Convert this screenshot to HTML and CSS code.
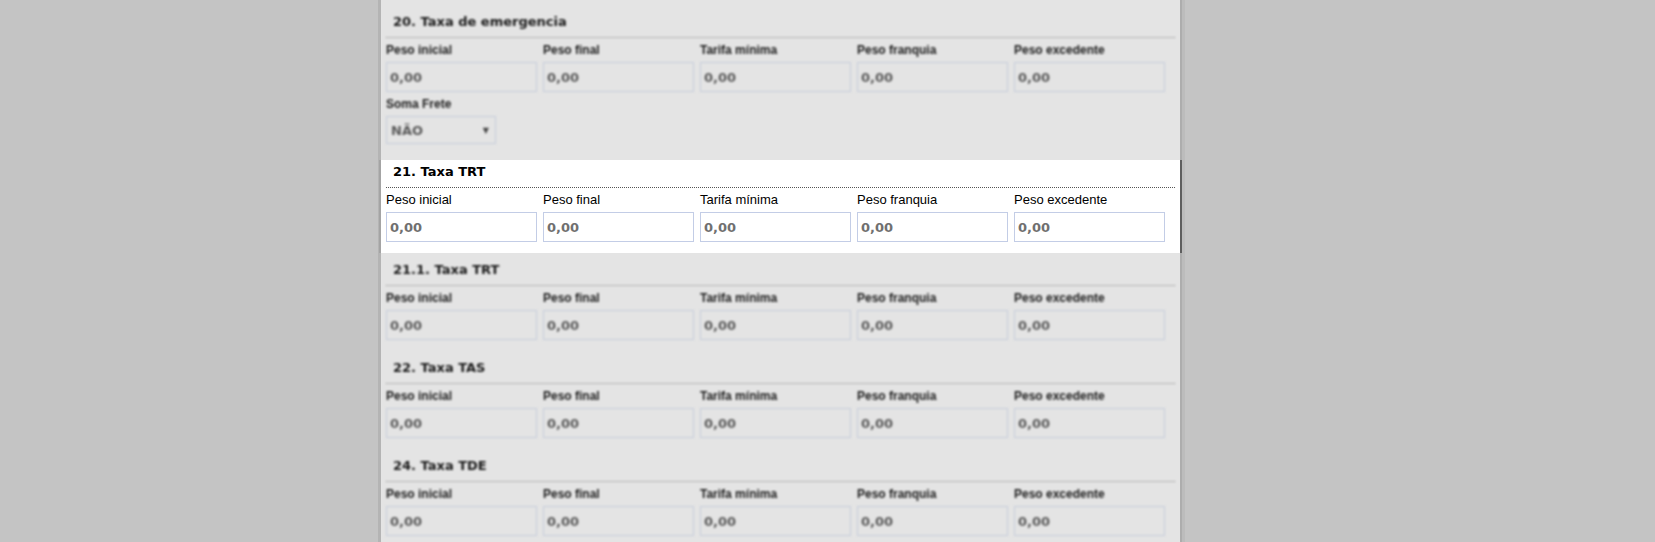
FILE: index.html
```html
<!DOCTYPE html>
<html lang="pt-BR">
<head>
  <meta charset="UTF-8" />
  <title>Taxas</title>
  <link rel="stylesheet" href="styles.css">
</head>
<body>
  <div id="panel">

    <div class="section dim">
      <h3>20. Taxa de emergencia</h3>
      <div class="row">
        <div class="field"><label>Peso inicial</label><input type="text" value="0,00"></div>
        <div class="field"><label>Peso final</label><input type="text" value="0,00"></div>
        <div class="field"><label>Tarifa mínima</label><input type="text" value="0,00"></div>
        <div class="field"><label>Peso franquia</label><input type="text" value="0,00"></div>
        <div class="field"><label>Peso excedente</label><input type="text" value="0,00"></div>
      </div>
      <div class="row">
        <div class="field">
          <label>Soma Frete</label>
          <div class="select"><span>NÃO</span><span class="arrow">▼</span></div>
        </div>
      </div>
    </div>

    <div class="section focus">
      <h3>21. Taxa TRT</h3>
      <div class="row">
        <div class="field"><label>Peso inicial</label><input type="text" value="0,00"></div>
        <div class="field"><label>Peso final</label><input type="text" value="0,00"></div>
        <div class="field"><label>Tarifa mínima</label><input type="text" value="0,00"></div>
        <div class="field"><label>Peso franquia</label><input type="text" value="0,00"></div>
        <div class="field"><label>Peso excedente</label><input type="text" value="0,00"></div>
      </div>
    </div>

    <div class="section dim">
      <h3>21.1. Taxa TRT</h3>
      <div class="row">
        <div class="field"><label>Peso inicial</label><input type="text" value="0,00"></div>
        <div class="field"><label>Peso final</label><input type="text" value="0,00"></div>
        <div class="field"><label>Tarifa mínima</label><input type="text" value="0,00"></div>
        <div class="field"><label>Peso franquia</label><input type="text" value="0,00"></div>
        <div class="field"><label>Peso excedente</label><input type="text" value="0,00"></div>
      </div>
    </div>

    <div class="section dim">
      <h3>22. Taxa TAS</h3>
      <div class="row">
        <div class="field"><label>Peso inicial</label><input type="text" value="0,00"></div>
        <div class="field"><label>Peso final</label><input type="text" value="0,00"></div>
        <div class="field"><label>Tarifa mínima</label><input type="text" value="0,00"></div>
        <div class="field"><label>Peso franquia</label><input type="text" value="0,00"></div>
        <div class="field"><label>Peso excedente</label><input type="text" value="0,00"></div>
      </div>
    </div>

    <div class="section dim">
      <h3>24. Taxa TDE</h3>
      <div class="row">
        <div class="field"><label>Peso inicial</label><input type="text" value="0,00"></div>
        <div class="field"><label>Peso final</label><input type="text" value="0,00"></div>
        <div class="field"><label>Tarifa mínima</label><input type="text" value="0,00"></div>
        <div class="field"><label>Peso franquia</label><input type="text" value="0,00"></div>
        <div class="field"><label>Peso excedente</label><input type="text" value="0,00"></div>
      </div>
    </div>

  </div>
</body>
</html>
```

FILE: styles.css
```css
html, body {
  margin: 0;
  padding: 0;
  background: #c4c4c4;
  overflow: hidden;
}
#panel {
  width: 799px;
  margin-left: 378px;
  padding-top: 10px;
  min-height: 600px;
  background: #e4e4e4;
  border-left: 3px solid #b4b4b4;
  border-right: 2px solid #adadad;
  box-shadow: 3px 0 0 #bcbcbc;
}
.section {
  padding: 4px 5px 11px;
  margin-bottom: 5px;
}
.section h3 {
  margin: 0;
  padding: 0 0 7px 7px;
  font-family: "DejaVu Sans", Verdana, sans-serif;
  font-size: 13px;
  font-weight: bold;
  line-height: 16px;
  color: #000;
  border-bottom: 1px dotted #555;
}
.row {
  display: flex;
  gap: 6px;
  margin-top: 4px;
}
.field {
  display: flex;
  flex-direction: column;
  gap: 4px;
  width: 151px;
}
.field label {
  font-family: "Liberation Sans", Arial, sans-serif;
  font-size: 13px;
  line-height: 16px;
  color: #000;
}
.field input {
  box-sizing: border-box;
  width: 151px;
  height: 30px;
  margin: 0;
  padding: 0 3px;
  border: 1px solid #c3cde6;
  background: #fff;
  font-family: "DejaVu Sans", Verdana, sans-serif;
  font-size: 13px;
  font-weight: bold;
  color: #707070;
  outline: none;
}
.select {
  box-sizing: border-box;
  width: 110px;
  height: 28px;
  padding: 0 6px 0 4px;
  display: flex;
  align-items: center;
  justify-content: space-between;
  border: 1px solid #c3cde6;
  background: #fff;
  font-family: "DejaVu Sans", Verdana, sans-serif;
  font-size: 13px;
  font-weight: bold;
  color: #555;
}
.select .arrow {
  font-size: 8px;
  color: #444;
}

/* everything but the highlighted block sits under a grey, blurred veil */
.dim {
  filter: blur(1px);
}
.dim h3 {
  color: #1a1a1a;
  border-bottom-color: #888;
}
.dim .field label {
  color: #1c1c1c;
  font-weight: bold;
  font-size: 12px;
}
.dim .field input,
.dim .select {
  background: #e4e4e4;
  border-color: #c6ccda;
  color: #5a5a5a;
}
.focus {
  position: relative;
  background: #fff;
  box-shadow: 2px 0 0 #5e5e5e, -2px 0 0 #a4a4a4;
}
```
